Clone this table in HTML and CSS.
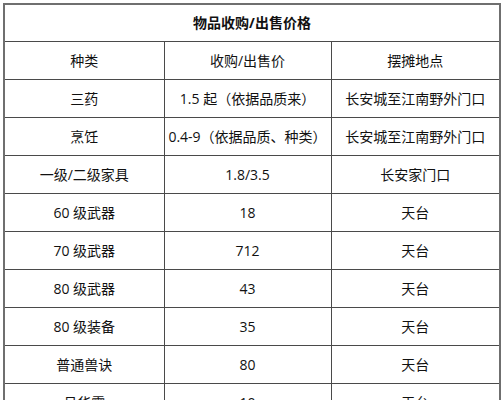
FILE: index.html
```html
<!DOCTYPE html>
<html lang="zh">
<head>
<meta charset="utf-8">
<link rel="stylesheet" href="styles.css">
</head>
<body>
<table class="price-table">
  <colgroup>
    <col class="col-a">
    <col class="col-b">
    <col class="col-c">
  </colgroup>
  <tr class="title-row"><th colspan="3">物品收购/出售价格</th></tr>
  <tr><td>种类</td><td>收购/出售价</td><td>摆摊地点</td></tr>
  <tr><td>三药</td><td>1.5 起（依据品质来）</td><td>长安城至江南野外门口</td></tr>
  <tr><td>烹饪</td><td>0.4-9（依据品质、种类）</td><td>长安城至江南野外门口</td></tr>
  <tr><td>一级/二级家具</td><td>1.8/3.5</td><td>长安家门口</td></tr>
  <tr><td>60 级武器</td><td>18</td><td>天台</td></tr>
  <tr><td>70 级武器</td><td>712</td><td>天台</td></tr>
  <tr><td>80 级武器</td><td>43</td><td>天台</td></tr>
  <tr><td>80 级装备</td><td>35</td><td>天台</td></tr>
  <tr><td>普通兽诀</td><td>80</td><td>天台</td></tr>
  <tr><td>月华露</td><td>10</td><td>天台</td></tr>
</table>
</body>
</html>
```

FILE: styles.css
```css
html, body {
  margin: 0;
  padding: 0;
  background: #ffffff;
}

body {
  padding: 3px 0 0 3px;
  font-family: "Open Sans", "Noto Sans CJK SC", sans-serif;
  font-size: 14px;
  color: #111111;
}

.price-table {
  border-collapse: collapse;
  table-layout: fixed;
  width: 496px;
  border: 2px solid #6f6f6f;
}

.col-a { width: 160px; }
.col-b { width: 167px; }
.col-c { width: 169px; }

.price-table th,
.price-table td {
  border: 1px solid #4a4a4a;
  height: 37px;
  padding: 0;
  text-align: center;
  vertical-align: middle;
  line-height: 20px;
  white-space: nowrap;
}

.title-row th {
  font-weight: bold;
  height: 36px;
}
```
